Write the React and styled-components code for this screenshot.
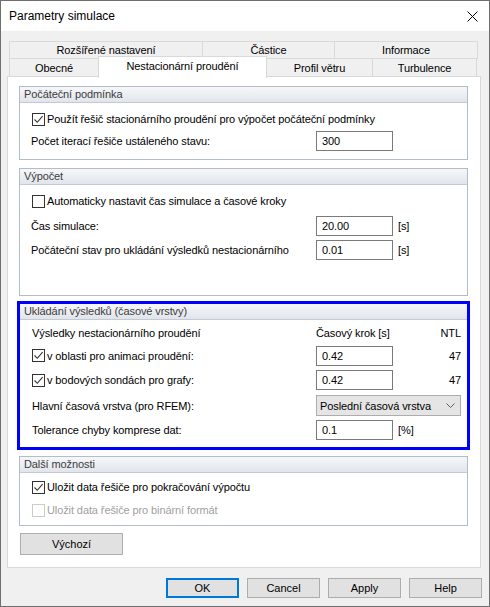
import styled, { createGlobalStyle } from "styled-components";

const GlobalStyle = createGlobalStyle`
  body {
    margin: 0;
  }
  * {
    box-sizing: border-box;
  }
`;

const StWindow = styled.div`
  width: 490px;
  height: 607px;
  border: 1px solid #6f6f6f;
  background-color: #f0f0f0;
  display: flex;
  flex-direction: column;
  font-family: "Liberation Sans", Arial, sans-serif;
  font-size: 11px;
  letter-spacing: -0.1px;
  color: #000;
`;

const StTitleBar = styled.div`
  height: 30px;
  flex-shrink: 0;
  background-color: #fff;
  display: flex;
  align-items: center;
  justify-content: space-between;
  padding: 0 11px 0 8px;
  font-size: 12px;
  letter-spacing: 0;
`;

const StBody = styled.div`
  flex: 1;
  display: flex;
  flex-direction: column;
  padding: 10px 8px 0 6px;
  min-height: 0;
`;

const StTabs = styled.div`
  margin: 0 3px 0 2px;
`;

const StTabRow = styled.div`
  display: flex;
  align-items: flex-start;
  height: ${(p) => p.$h}px;
  margin-top: ${(p) => p.$mt || 0}px;
`;

const StTab = styled.div`
  width: ${(p) => p.$w}px;
  height: ${(p) => (p.$active ? 22 : p.$h)}px;
  margin-left: -1px;
  margin-top: ${(p) => (p.$active ? -2 : 0)}px;
  border: 1px solid #d9d9d9;
  border-bottom: ${(p) => (p.$active ? "none" : "1px solid #d9d9d9")};
  background-color: ${(p) => (p.$active ? "#fff" : "#f0f0f0")};
  display: flex;
  align-items: center;
  justify-content: center;
  padding-bottom: ${(p) => (p.$active ? 3 : 0)}px;
  position: ${(p) => (p.$active ? "relative" : "static")};
  z-index: ${(p) => (p.$active ? 1 : "auto")};
  &:first-child {
    margin-left: 0;
  }
`;

const StPanel = styled.div`
  flex: 1;
  margin-top: -1px;
  background-color: #fff;
  border: 1px solid #d9d9d9;
  padding: 9px 12px 12px 11px;
  display: flex;
  flex-direction: column;
`;

const StGroup = styled.div`
  margin-top: ${(p) => p.$mt || 0}px;
  margin-left: ${(p) => (p.$highlight ? -2 : 0)}px;
  margin-right: ${(p) => (p.$highlight ? -2 : 0)}px;
  border: ${(p) => (p.$highlight ? "3px solid #0000ff" : "1px solid #b3bccb")};
  background-color: #fff;
`;

const StGroupHeader = styled.div`
  height: 16px;
  line-height: 15px;
  padding-left: 4px;
  color: #3c3c3c;
  background: linear-gradient(#f6f7f9, #e1e5eb);
  border-bottom: 1px solid #c3cad6;
`;

const StGroupBody = styled.div`
  padding: ${(p) => p.$pt}px 6px ${(p) => p.$pb}px 11px;
`;

const StRow = styled.div`
  height: ${(p) => p.$h}px;
  display: grid;
  grid-template-columns: 285px 77px 1fr;
  align-items: center;
`;

const StCheckLabel = styled.label`
  display: flex;
  align-items: center;
  gap: 2px;
  margin-left: 1px;
  white-space: nowrap;
  color: ${(p) => (p.$disabled ? "#a0a0a0" : "#000")};
  grid-column: ${(p) => (p.$wide ? "1 / 4" : "auto")};
`;

const StBox = styled.span`
  width: 13px;
  height: 13px;
  flex-shrink: 0;
  border: 1px solid ${(p) => (p.$disabled ? "#cccccc" : "#333")};
  background-color: #fff;
  display: flex;
  align-items: center;
  justify-content: center;
`;

const StText = styled.span`
  white-space: nowrap;
  padding-left: ${(p) => p.$pl || 0}px;
  text-align: ${(p) => p.$align || "left"};
`;

const StInput = styled.div`
  height: 20px;
  border: 1px solid #7a7a7a;
  background-color: #fff;
  padding-left: 5px;
  display: flex;
  align-items: center;
`;

const StSelect = styled.div`
  grid-column: 2 / 4;
  height: 21px;
  border: 1px solid #adadad;
  background-color: #e5e5e5;
  padding: 0 5px 0 3px;
  display: flex;
  align-items: center;
  justify-content: space-between;
`;

const StButton = styled.button`
  width: ${(p) => p.$w || 73}px;
  height: ${(p) => p.$h || 20}px;
  margin: 0;
  padding: 0;
  background-color: #e1e1e1;
  border: ${(p) => (p.$focus ? "2px solid #0078d7" : "1px solid #adadad")};
  font-family: inherit;
  font-size: 11px;
  color: #000;
`;

const StDefaultButton = styled(StButton)`
  margin-top: 7px;
  margin-left: 1px;
`;

const StFooter = styled.div`
  height: 38px;
  flex-shrink: 0;
  display: flex;
  justify-content: flex-end;
  gap: 8px;
  padding: 10px 7px 8px 0;
`;

function CheckBox({ checked, disabled }) {
  return (
    <StBox $disabled={disabled}>
      {checked && (
        <svg width="11" height="11" viewBox="0 0 11 11">
          <path d="M1.5 5.5 L4.3 8.3 L9.6 2.2" fill="none" stroke="#333" strokeWidth="1.1" />
        </svg>
      )}
    </StBox>
  );
}

function Check({ children, checked, disabled, wide }) {
  return (
    <StCheckLabel $disabled={disabled} $wide={wide}>
      <CheckBox checked={checked} disabled={disabled} />
      <span>{children}</span>
    </StCheckLabel>
  );
}

const topTabs = [
  { label: "Rozšířené nastavení", w: 194 },
  { label: "Částice", w: 133 },
  { label: "Informace", w: 144 },
];

const bottomTabs = [
  { label: "Obecné", w: 90 },
  { label: "Nestacionární proudění", w: 169, active: true },
  { label: "Profil větru", w: 107 },
  { label: "Turbulence", w: 105 },
];

function App() {
  return (
    <>
      <GlobalStyle />
      <StWindow>
        <StTitleBar>
          <span>Parametry simulace</span>
          <svg width="11" height="11" viewBox="0 0 11 11">
            <path d="M0.5 0.5 L10.5 10.5 M10.5 0.5 L0.5 10.5" stroke="#000" strokeWidth="1" />
          </svg>
        </StTitleBar>

        <StBody>
          <StTabs>
            <StTabRow $h={18}>
              {topTabs.map((t) => (
                <StTab key={t.label} $w={t.w} $h={18}>
                  {t.label}
                </StTab>
              ))}
            </StTabRow>
            <StTabRow $h={19} $mt={-1}>
              {bottomTabs.map((t) => (
                <StTab key={t.label} $w={t.w} $h={19} $active={t.active}>
                  {t.label}
                </StTab>
              ))}
            </StTabRow>
          </StTabs>

          <StPanel>
            <StGroup>
              <StGroupHeader>Počáteční podmínka</StGroupHeader>
              <StGroupBody $pt={5} $pb={7}>
                <StRow $h={22}>
                  <Check checked wide>
                    Použít řešič stacionárního proudění pro výpočet počáteční podmínky
                  </Check>
                </StRow>
                <StRow $h={22}>
                  <StText>Počet iterací řešiče ustáleného stavu:</StText>
                  <StInput>300</StInput>
                </StRow>
              </StGroupBody>
            </StGroup>

            <StGroup $mt={8}>
              <StGroupHeader>Výpočet</StGroupHeader>
              <StGroupBody $pt={4} $pb={33}>
                <StRow $h={24}>
                  <Check wide>Automaticky nastavit čas simulace a časové kroky</Check>
                </StRow>
                <StRow $h={25}>
                  <StText>Čas simulace:</StText>
                  <StInput>20.00</StInput>
                  <StText $pl={5}>[s]</StText>
                </StRow>
                <StRow $h={24}>
                  <StText>Počáteční stav pro ukládání výsledků nestacionárního</StText>
                  <StInput>0.01</StInput>
                  <StText $pl={5}>[s]</StText>
                </StRow>
              </StGroupBody>
            </StGroup>

            <StGroup $mt={5} $highlight>
              <StGroupHeader>Ukládání výsledků (časové vrstvy)</StGroupHeader>
              <StGroupBody $pt={2} $pb={5}>
                <StRow $h={22}>
                  <StText $pl={1}>Výsledky nestacionárního proudění</StText>
                  <StText>Časový krok [s]</StText>
                  <StText $align="right">NTL</StText>
                </StRow>
                <StRow $h={23}>
                  <Check checked>v oblasti pro animaci proudění:</Check>
                  <StInput>0.42</StInput>
                  <StText $align="right">47</StText>
                </StRow>
                <StRow $h={26}>
                  <Check checked>v bodových sondách pro grafy:</Check>
                  <StInput>0.42</StInput>
                  <StText $align="right">47</StText>
                </StRow>
                <StRow $h={25}>
                  <StText $pl={1}>Hlavní časová vrstva (pro RFEM):</StText>
                  <StSelect>
                    <span>Poslední časová vrstva</span>
                    <svg width="9" height="5" viewBox="0 0 9 5">
                      <path d="M0.5 0.5 L4.5 4.5 L8.5 0.5" fill="none" stroke="#606060" strokeWidth="1" />
                    </svg>
                  </StSelect>
                </StRow>
                <StRow $h={24}>
                  <StText $pl={1}>Tolerance chyby komprese dat:</StText>
                  <StInput>0.1</StInput>
                  <StText $pl={5}>[%]</StText>
                </StRow>
              </StGroupBody>
            </StGroup>

            <StGroup $mt={6}>
              <StGroupHeader>Další možnosti</StGroupHeader>
              <StGroupBody $pt={3} $pb={3}>
                <StRow $h={22}>
                  <Check checked wide>Uložit data řešiče pro pokračování výpočtu</Check>
                </StRow>
                <StRow $h={24}>
                  <Check disabled wide>Uložit data řešiče pro binární formát</Check>
                </StRow>
              </StGroupBody>
            </StGroup>

            <StDefaultButton $w={103} $h={22}>Výchozí</StDefaultButton>
          </StPanel>
        </StBody>

        <StFooter>
          <StButton $focus>OK</StButton>
          <StButton>Cancel</StButton>
          <StButton>Apply</StButton>
          <StButton>Help</StButton>
        </StFooter>
      </StWindow>
    </>
  );
}

export default App;
